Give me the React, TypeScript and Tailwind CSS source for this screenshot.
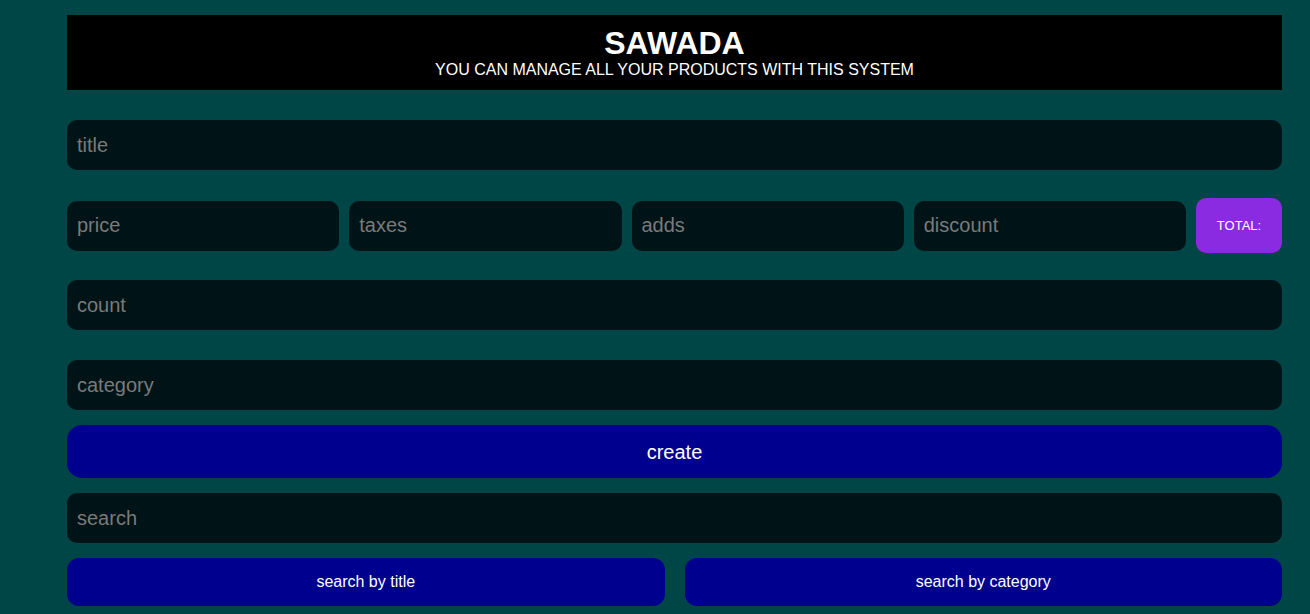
import React from "react";

const inputCls =
  "h-[50px] w-full rounded-[10px] bg-[#001417] px-[10px] text-[20px] text-white placeholder:text-[#7a7a7a] outline-none";

export default function App() {
  return (
    <div
      className="min-h-[614px] w-full bg-[#004646] pt-[15px]"
      style={{ fontFamily: '"Liberation Sans", Arial, sans-serif' }}
    >
      <div className="ml-[67px] w-[1215px]">
        <div className="flex h-[75px] flex-col items-center bg-black pt-[10px] text-white">
          <h1 className="text-[32px] font-bold leading-[36px]">SAWADA</h1>
          <p className="text-[16px] leading-[18px]">YOU CAN MANAGE ALL YOUR PRODUCTS WITH THIS SYSTEM</p>
        </div>
        <div className="mt-[30px]">
          <input className={inputCls} placeholder="title" />
        </div>
        <div className="mt-[28px] flex items-center gap-[10px]">
          <input className={inputCls + " flex-1"} placeholder="price" />
          <input className={inputCls + " flex-1"} placeholder="taxes" />
          <input className={inputCls + " flex-1"} placeholder="adds" />
          <input className={inputCls + " flex-1"} placeholder="discount" />
          <div className="flex h-[55px] w-[86px] shrink-0 items-center justify-center rounded-[10px] bg-[#8a2be2] text-[13px] text-white">
            TOTAL:
          </div>
        </div>
        <div className="mt-[27px]">
          <input className={inputCls} placeholder="count" />
        </div>
        <div className="mt-[30px]">
          <input className={inputCls} placeholder="category" />
        </div>
        <button className="mt-[15px] flex h-[53px] w-full items-center justify-center rounded-[15px] bg-[#00008f] text-[20px] text-white">
          create
        </button>
        <div className="mt-[15px]">
          <input className={inputCls} placeholder="search" />
        </div>
        <div className="mt-[15px] flex gap-[20px]">
          <button className="flex h-[48px] flex-1 items-center justify-center rounded-[12px] bg-[#00008f] text-[16px] text-white">
            search by title
          </button>
          <button className="flex h-[48px] flex-1 items-center justify-center rounded-[12px] bg-[#00008f] text-[16px] text-white">
            search by category
          </button>
        </div>
      </div>
    </div>
  );
}
